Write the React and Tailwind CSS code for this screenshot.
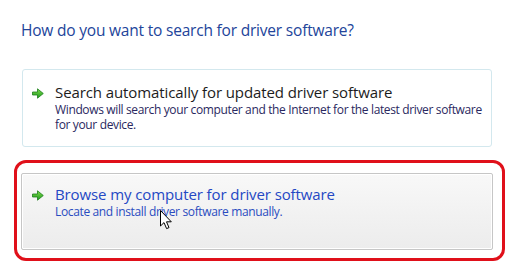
import React from "react"

function GreenArrow() {
    return (
        <svg width="12" height="11" viewBox="0 0 12 11" className="shrink-0">
            <defs>
                <linearGradient id="ga" x1="0" y1="0" x2="0" y2="1">
                    <stop offset="0" stopColor="#7fdc4a" />
                    <stop offset="1" stopColor="#1f9a1f" />
                </linearGradient>
            </defs>
            <path d="M0.5 4 H5.5 V0.8 L11.3 5.5 L5.5 10.2 V7 H0.5 Z" fill="url(#ga)" stroke="#1b7d1b" strokeWidth="0.8" strokeLinejoin="round" />
        </svg>
    )
}

function Cursor() {
    return (
        <svg width="13" height="20" viewBox="0 0 13 20" className="absolute left-[160px] top-[210px]">
            <path d="M0.5 0.5 V16 L4 12.6 L6.6 18.6 L9 17.6 L6.5 11.8 H11.3 Z" fill="#fff" stroke="#000" strokeWidth="1" strokeLinejoin="round" />
        </svg>
    )
}

export default function App() {
    return (
        <div className="w-[521px] h-[269px] bg-white relative overflow-hidden font-['Open_Sans',sans-serif]">
            <h1 className="pl-[21px] pt-[20px] text-[15.5px] leading-[20px] text-[#22449a] tracking-[-0.2px]">
                How do you want to search for driver software?
            </h1>

            <div className="ml-[22px] mt-[29px] w-[470px] h-[78px] border border-[#d3e8ee] rounded-[3px] bg-white pl-[9px] pt-[12px] flex gap-[11px]">
                <div className="pt-[6px]"><GreenArrow /></div>
                <div>
                    <p className="text-[15px] leading-[20px] text-[#1c1c1c] tracking-[-0.1px]">Search automatically for updated driver software</p>
                    <p className="text-[12px] leading-[15px] text-[#2a2860] tracking-[-0.36px]">
                        Windows will search your computer and the Internet for the latest driver software for your device.
                    </p>
                </div>
            </div>

            <div className="ml-[14px] mt-[13px] w-[491px] h-[101px] border-[3px] border-[#e0101a] rounded-[12px] pl-[4px] pt-[10px]">
                <div className="w-[472px] h-[77px] border border-[#c6c6c6] rounded-[2px] bg-gradient-to-b from-[#f8f8f8] to-[#ececec] shadow-[inset_0_0_0_1px_#ffffff] pl-[10px] pt-[10px] flex gap-[11px]">
                    <div className="pt-[6px]"><GreenArrow /></div>
                    <div>
                        <p className="text-[15px] leading-[20px] text-[#2448c4] tracking-[-0.1px]">Browse my computer for driver software</p>
                        <p className="text-[12px] leading-[15px] text-[#2a4cc0] tracking-[-0.36px]">Locate and install driver software manually.</p>
                    </div>
                </div>
            </div>

            <Cursor />
        </div>
    )
}
